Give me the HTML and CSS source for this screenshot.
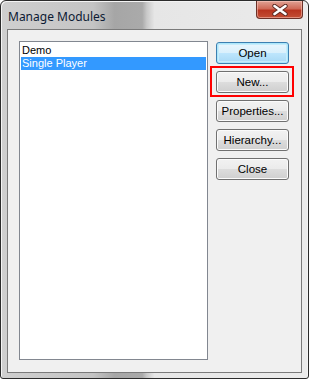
FILE: index.html
```html
<!DOCTYPE html>
<html lang="en">
<head>
    <meta charset="UTF-8">
    <title>Manage Modules</title>
    <link rel="stylesheet" href="styles.css">
</head>
<body>
    <div class="window">
        <div class="titlebar">
            <span class="title">Manage Modules</span>
            <div class="close-btn">
                <svg width="18" height="12" viewBox="0 0 18 12">
                    <path d="M3.5 2 L14.5 10 M14.5 2 L3.5 10" stroke="#5a2a22" stroke-width="4.4" stroke-linecap="round"/>
                    <path d="M3.5 2 L14.5 10 M14.5 2 L3.5 10" stroke="#ffffff" stroke-width="2.6" stroke-linecap="round"/>
                </svg>
            </div>
        </div>

        <div class="client">
            <div class="listbox">
                <div class="item">Demo</div>
                <div class="item selected">Single Player</div>
            </div>

            <div class="buttons">
                <button class="btn default">Open</button>
                <button class="btn">New...</button>
                <button class="btn">Properties...</button>
                <button class="btn">Hierarchy...</button>
                <button class="btn">Close</button>
                <div class="mark"></div>
            </div>
        </div>
    </div>
</body>
</html>
```

FILE: styles.css
```css
* {
    margin: 0;
    padding: 0;
    box-sizing: border-box;
}

body {
    background: #ffffff;
    font-family: "Liberation Sans", Arial, sans-serif;
    font-size: 11px;
}

.window {
    width: 309px;
    height: 379px;
    border: 1px solid #2b2b2b;
    border-radius: 6px 6px 3px 3px;
    background: linear-gradient(90deg, #cfcfcf 0%, #c4c4c4 30%, #a6a6a6 37%, #aaaaaa 46%, #c9c9c9 47.5%, #e6e6e6 50%, #ebebeb 100%);
    box-shadow: inset 1px 1px 0 #f4f4f4, inset -1px 0 0 #f4f4f4;
    padding: 0 6px 5px 6px;
    display: flex;
    flex-direction: column;
}

.titlebar {
    height: 28px;
    display: flex;
    justify-content: space-between;
    align-items: flex-start;
}

.title {
    font-family: "Noto Sans", "Open Sans", sans-serif;
    font-size: 12px;
    color: #0c1a33;
    padding: 7px 0 0 1px;
}

.close-btn {
    width: 47px;
    height: 18px;
    margin-right: -1px;
    border: 1px solid #6b3128;
    border-top: none;
    border-radius: 0 0 4px 4px;
    background: linear-gradient(#e0a294 0%, #cf6a57 45%, #b8341f 55%, #c34f35 100%);
    box-shadow: inset 0 0 0 1px rgba(255, 210, 200, 0.5);
    display: flex;
    align-items: center;
    justify-content: center;
}

.client {
    flex: 1;
    border: 1px solid #7a7a7a;
    background: #f0f0f0;
    padding: 11px 12px 12px 11px;
    display: flex;
    align-items: flex-start;
}

.listbox {
    width: 189px;
    height: 319px;
    border: 1px solid #828790;
    background: #ffffff;
    padding: 1px;
}

.item {
    height: 13px;
    line-height: 13px;
    padding-left: 1px;
    color: #000000;
}

.item:first-child {
    margin-top: 1px;
}

.item.selected {
    background: #3399ff;
    color: #ffffff;
}

.buttons {
    position: relative;
    margin: 1px 0 0 8px;
    display: flex;
    flex-direction: column;
    gap: 7px;
}

.btn {
    width: 73px;
    height: 22px;
    font-family: "Liberation Sans", Arial, sans-serif;
    font-size: 11.5px;
    color: #000000;
    border: 1px solid #707070;
    border-radius: 3px;
    background: linear-gradient(#f2f2f2 0%, #ebebeb 50%, #dddddd 50%, #cfcfcf 100%);
    box-shadow: inset 0 0 0 1px #fbfbfb;
}

.btn.default {
    border-color: #3c7fb1;
    background: linear-gradient(#eaf6fd 0%, #d9f0fc 50%, #bee6fd 50%, #a7d9f5 100%);
    box-shadow: inset 0 0 0 1px #48d5fd33, inset 0 0 0 2px #c6ecfb;
}

.mark {
    position: absolute;
    left: -6px;
    top: 24px;
    width: 84px;
    height: 31px;
    border: 2px solid #ff0000;
}
```
